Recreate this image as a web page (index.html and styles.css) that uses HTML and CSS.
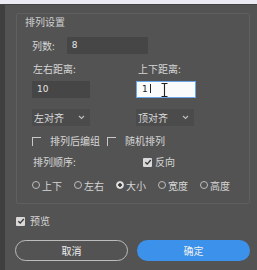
FILE: index.html
```html
<!DOCTYPE html>
<html lang="zh">
<head>
<meta charset="utf-8">
<link rel="stylesheet" href="styles.css">
</head>
<body>
<div class="topbar"></div>
<div class="shell">
  <div class="strip"></div>
  <div class="dialog">
    <div class="group">
      <div class="title">排列设置</div>
      <div class="row-count">
        <span class="lbl">列数:</span>
        <div class="field wide">8</div>
      </div>
      <div class="grid labels">
        <span class="lbl">左右距离:</span>
        <span class="lbl">上下距离:</span>
      </div>
      <div class="grid inputs">
        <div class="field small">10</div>
        <div class="field small focus">1<span class="caret"></span>
          <svg class="ibeam" width="7" height="14" viewBox="0 0 7 14"><path d="M0.5 0.5h2.5l0.5 0.8l0.5-0.8h2.5M3.5 1.3v11.4M0.5 13.5h2.5l0.5-0.8l0.5 0.8h2.5" fill="none" stroke="#222" stroke-width="1.1"/></svg>
        </div>
      </div>
      <div class="grid selects">
        <div class="select">左对齐<svg width="7" height="5" viewBox="0 0 7 5"><path d="M1 1l2.5 2.5L6 1" fill="none" stroke="#bbb" stroke-width="1.2"/></svg></div>
        <div class="select">顶对齐<svg width="7" height="5" viewBox="0 0 7 5"><path d="M1 1l2.5 2.5L6 1" fill="none" stroke="#bbb" stroke-width="1.2"/></svg></div>
      </div>
      <div class="checks">
        <span class="chk"><span class="box sunken"></span>排列后编组</span>
        <span class="chk second"><span class="box sunken"></span>随机排列</span>
      </div>
      <div class="grid order">
        <span class="lbl">排列顺序:</span>
        <span class="chk rev"><span class="box checked"><svg width="8" height="8" viewBox="0 0 8 8"><path d="M1.3 4.2l1.9 1.9L6.8 2" fill="none" stroke="#3a3a3a" stroke-width="1.4"/></svg></span>反向</span>
      </div>
      <div class="radios">
        <span class="radio"><span class="dot"></span>上下</span>
        <span class="radio"><span class="dot"></span>左右</span>
        <span class="radio"><span class="dot on"></span>大小</span>
        <span class="radio"><span class="dot"></span>宽度</span>
        <span class="radio"><span class="dot"></span>高度</span>
      </div>
    </div>
    <div class="preview">
      <span class="chk"><span class="box checked"><svg width="8" height="8" viewBox="0 0 8 8"><path d="M1.3 4.2l1.9 1.9L6.8 2" fill="none" stroke="#3a3a3a" stroke-width="1.4"/></svg></span>预览</span>
    </div>
    <div class="buttons">
      <button class="btn cancel">取消</button>
      <button class="btn ok">确定</button>
    </div>
  </div>
</div>
</body>
</html>
```
FILE: styles.css
```css
* { box-sizing: border-box; }
html, body { margin: 0; padding: 0; }
body {
  width: 257px;
  height: 270px;
  overflow: hidden;
  background: #535353;
  font-family: "Noto Sans CJK SC", "Noto Sans", sans-serif;
  font-size: 10px;
  color: #d6d6d6;
}
.topbar {
  height: 4px;
  background: #ecebf3;
  border-bottom: 1px solid #444;
  height: 5px;
}
.shell {
  display: flex;
  height: 265px;
}
.strip {
  width: 5px;
  background: #3f3f3f;
  flex: none;
}
.dialog {
  flex: 1;
  padding-left: 11px;
  padding-top: 8px;
}
.group {
  width: 234px;
  border: 1px solid #5f5f5f;
  border-radius: 2px;
  padding: 0 0 11px 15px;
}
.title {
  height: 16px;
  line-height: 16px;
  margin-left: -7px;
  color: #cfcfcf;
}
.lbl { line-height: 14px; }
.row-count {
  margin-top: 7px;
  display: flex;
  align-items: center;
  gap: 12px;
}
.field {
  height: 17px;
  line-height: 17px;
  background: #464646;
  color: #e6e6e6;
  padding-left: 5px;
  font-family: "DejaVu Sans", sans-serif;
  font-size: 9px;
}
.field.wide { width: 81px; }
.field.small { width: 58px; }
.field.focus {
  width: 60px;
  background: #fbfbfb;
  color: #222;
  border: 1px solid #6aa6e8;
  line-height: 15px;
  position: relative;
}
.caret {
  display: inline-block;
  width: 1px;
  height: 9px;
  background: #222;
  margin-left: 2px;
  vertical-align: -1px;
}
.ibeam {
  position: absolute;
  left: 24px;
  top: 1px;
}
.grid {
  display: grid;
  grid-template-columns: 104px auto;
  align-items: center;
}
.labels { margin-top: 8px; padding-left: 1px; }
.labels .lbl + .lbl { margin-left: 1px; }
.inputs { margin-top: 5px; }
.selects { margin-top: 11px; }
.select {
  width: 58px;
  height: 17px;
  background: #4b4b4b;
  display: flex;
  align-items: center;
  justify-content: space-between;
  padding: 0 5px 0 2px;
  color: #dcdcdc;
}
.select svg { display: block; }
.checks {
  margin-top: 8px;
  display: flex;
  align-items: center;
  height: 14px;
}
.chk {
  display: inline-flex;
  align-items: center;
  line-height: 14px;
}
.box {
  width: 9px;
  height: 9px;
  margin-right: 5px;
  display: inline-flex;
  align-items: center;
  justify-content: center;
  flex: none;
}
.checks .box { margin-right: 5px; }
.checks .chk:first-child .box { margin-right: 9px; }
.checks .second { margin-left: 7px; }
.checks .second .box { margin-right: 9px; }
.sunken {
  border-top: 1px solid #c8c8c8;
  border-left: 1px solid #c8c8c8;
}
.checked {
  background: #d9d9d9;
  border-radius: 1px;
}
.order { margin-top: 7px; padding-left: 1px; }
.rev { margin-left: 6px; }
.rev .box { margin-right: 3px; }
.radios {
  margin-top: 9px;
  display: flex;
  align-items: center;
  height: 14px;
}
.radio {
  display: inline-flex;
  align-items: center;
  width: 42px;
}
.dot {
  width: 8px;
  height: 8px;
  border: 1px solid #bdbdbd;
  border-radius: 50%;
  margin-right: 2px;
  flex: none;
}
.dot.on {
  border-color: #e0e0e0;
  background: radial-gradient(circle, #3a3a3a 0 1.5px, #e0e0e0 2px);
}
.preview {
  margin-top: 10px;
  height: 14px;
  display: flex;
  align-items: center;
}
.preview .box { margin-right: 5px; }
.buttons {
  margin-top: 12px;
  display: flex;
  gap: 9px;
  margin-left: -1px;
}
.btn {
  width: 113px;
  height: 21px;
  border-radius: 11px;
  font-family: "Noto Sans CJK SC", sans-serif;
  font-size: 10px;
  color: #f0f0f0;
  padding: 0;
}
.cancel {
  background: transparent;
  border: 1.5px solid #bcbcbc;
}
.ok {
  background: #3c92ea;
  border: none;
}
```
